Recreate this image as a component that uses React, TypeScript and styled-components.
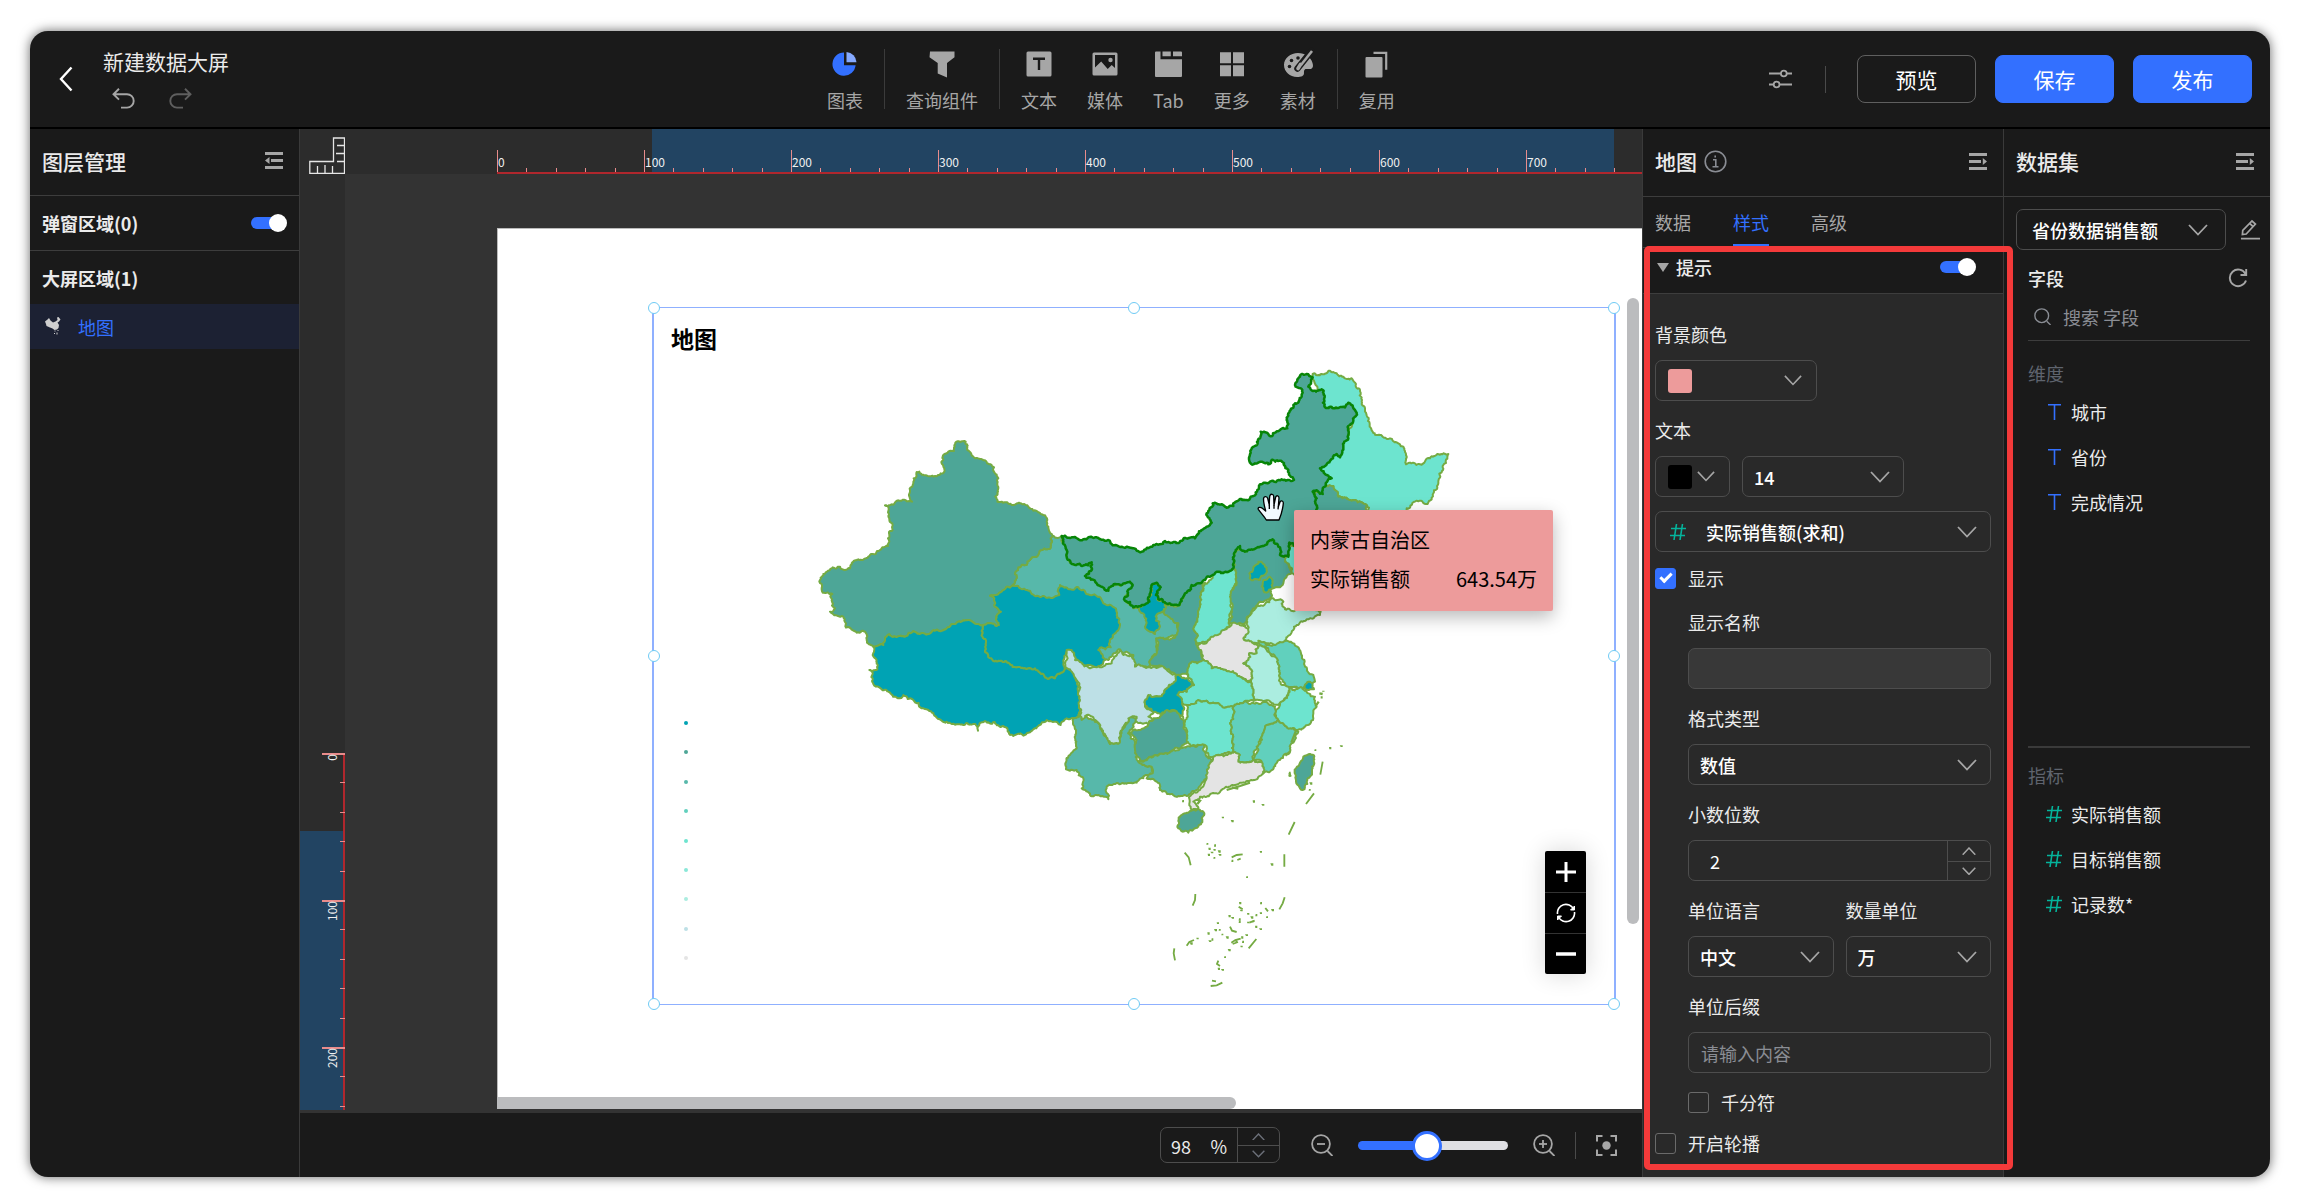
import React from "react";
import styled, { createGlobalStyle } from "styled-components";

const FONT = '"Noto Sans CJK SC", "Noto Sans", sans-serif';

const Global = createGlobalStyle`
  *, *::before, *::after { box-sizing: border-box; }
  body { margin: 0; background: #fff; font-family: ${FONT}; }
  button, input, select { font-family: inherit; color: inherit; margin: 0; padding: 0; }
  button { background: none; border: 0; cursor: pointer; }
  svg { display: block; flex: none; }
  h1, h2, h3, ul { margin: 0; padding: 0; font-weight: inherit; list-style: none; }
`;

/* ---------- shell ---------- */
const Page = styled.div`
  height: 100vh;
  padding: 31px 30px 20px;
  display: flex;
`;
const Shell = styled.div`
  flex: 1;
  min-width: 0;
  display: flex;
  flex-direction: column;
  background: #1a1a1a;
  color: #ebebeb;
  border-radius: 18px;
  overflow: hidden;
  box-shadow: 0 0 12px rgba(0, 0, 0, 0.6);
  font-size: 18px;
  line-height: 24px;
`;
const Header = styled.header`
  height: 98px;
  border-bottom: 2px solid #000;
  display: grid;
  grid-template-columns: minmax(0, 10fr) auto minmax(0, 11fr);
  align-items: center;
`;
const Body = styled.div`
  flex: 1;
  min-height: 0;
  display: grid;
  grid-template-columns: 270px minmax(0, 1fr) 361px 267px;
`;

/* ---------- header ---------- */
const HeadLeft = styled.div`
  display: flex;
  align-items: center;
  gap: 30px;
  padding-left: 29px;
`;
const TitleBlock = styled.div`
  display: flex;
  flex-direction: column;
  gap: 12px;
  padding-bottom: 4px;
`;
const DocTitle = styled.h1`
  font-size: 21px;
  line-height: 30px;
`;
const History = styled.div`
  display: flex;
  gap: 34px;
  padding-left: 9px;
`;
const PlainButton = styled.button`
  display: flex;
  align-items: center;
  justify-content: center;
`;
const Tools = styled.nav`
  display: flex;
  align-items: center;
`;
const Tool = styled.button`
  display: flex;
  flex-direction: column;
  align-items: center;
  gap: 10px;
  padding: 4px 15px 0;
  font-size: 18px;
  line-height: 24px;
  color: #a6a6a6;
`;
const ToolRule = styled.span`
  width: 1px;
  height: 60px;
  margin: 0 6px;
  background: #3b3b3b;
`;
const HeadRight = styled.div`
  display: flex;
  align-items: center;
  justify-content: flex-end;
  gap: 19px;
  padding-right: 18px;
`;
const HeadTools = styled.div`
  display: flex;
  align-items: center;
  gap: 33px;
  padding-right: 12px;
`;
const ShortRule = styled.span`
  width: 1px;
  height: 27px;
  background: #4a4a4a;
`;
const Action = styled.button<{ $primary?: boolean }>`
  width: 119px;
  height: 48px;
  border-radius: 8px;
  border: 1px solid ${(p) => (p.$primary ? "#3370ff" : "#5f5f5f")};
  background: ${(p) => (p.$primary ? "#3370ff" : "transparent")};
  color: #fff;
  font-size: 21px;
`;

/* ---------- shared panel parts ---------- */
const PanelHead = styled.div<{ $h?: number }>`
  height: ${(p) => p.$h ?? 68}px;
  border-bottom: 1px solid #3d3d3d;
  padding: 0 16px 3px 12px;
  display: flex;
  align-items: center;
  justify-content: space-between;
`;
const PanelTitle = styled.h2`
  display: flex;
  align-items: center;
  gap: 7px;
  font-size: 21px;
  line-height: 30px;
  font-weight: 500;
`;
const Toggle = styled.input`
  appearance: none;
  position: relative;
  width: 36px;
  height: 18px;
  cursor: pointer;
  &::before {
    content: "";
    position: absolute;
    inset: 3px 4px 3px 0;
    border-radius: 6px;
    background: #5f5f5f;
  }
  &::after {
    content: "";
    position: absolute;
    left: 0;
    top: 0;
    width: 18px;
    height: 18px;
    border-radius: 50%;
    background: #fff;
  }
  &:checked::before { background: #3370ff; }
  &:checked::after { left: 18px; }
`;

/* ---------- layer panel ---------- */
const Layers = styled.aside`
  border-right: 1px solid #3a3a3a;
`;
const LayerGroup = styled.label<{ $ruled?: boolean }>`
  height: ${(p) => (p.$ruled ? 55 : 53)}px;
  padding: 0 12px;
  border-bottom: ${(p) => (p.$ruled ? "1px solid #3d3d3d" : "0")};
  display: flex;
  align-items: center;
  justify-content: space-between;
  font-weight: 700;
`;
const LayerItem = styled.button`
  width: 100%;
  height: 45px;
  padding: 0 15px;
  display: flex;
  align-items: center;
  gap: 17px;
  background: #1c2133;
  color: #3370ff;
  font-size: 18px;
`;

/* ---------- canvas ---------- */
const Stage = styled.main`
  display: grid;
  min-width: 0;
  min-height: 0;
  grid-template-columns: 45px minmax(0, 1fr);
  grid-template-rows: 45px minmax(0, 1fr) 67px;
`;
const Corner = styled.div`
  background: #2c2c2c;
  display: flex;
  align-items: flex-end;
  justify-content: flex-end;
`;
const Ruler = styled.div`
  background: #2c2c2c;
  overflow: hidden;
  min-height: 0;
`;
const Viewport = styled.div`
  position: relative;
  overflow: hidden;
  background: #333;
`;
const Sheet = styled.div`
  position: absolute;
  left: 152px;
  top: 54px;
  right: 0;
  bottom: 1px;
  background: #fff;
  border-top: 1px solid #bbb;
  border-left: 1px solid #bbb;
  color: #000;
`;
const Widget = styled.section`
  position: absolute;
  left: 154px;
  top: 78px;
  width: 964px;
  height: 698px;
  border: solid #8fb0ff;
  border-width: 1px 2px;
`;
const Handle = styled.i<{ $x: number; $y: number }>`
  position: absolute;
  left: ${(p) => p.$x}%;
  top: ${(p) => p.$y}%;
  width: 12px;
  height: 12px;
  transform: translate(-50%, -50%);
  border-radius: 50%;
  border: 1px solid #6fcbf5;
  background: #fff;
`;
const MapTitle = styled.h3`
  padding: 14px 17px;
  font-size: 23px;
  line-height: 32px;
  font-weight: 700;
`;
const MapCanvas = styled.svg`
  position: absolute;
  left: 146px;
  top: 42px;
`;
const Legend = styled.ul`
  position: absolute;
  left: 30px;
  top: 413px;
  height: 239px;
  display: flex;
  flex-direction: column;
  justify-content: space-between;
`;
const LegendDot = styled.li<{ $c: string }>`
  width: 4px;
  height: 4px;
  border-radius: 50%;
  background: ${(p) => p.$c};
`;
const ZoomBox = styled.div`
  position: absolute;
  right: 28px;
  bottom: 30px;
  width: 41px;
  border-radius: 2px;
  overflow: hidden;
  background: #000;
  box-shadow: 0 0 24px rgba(0, 0, 0, 0.16);
`;
const ZoomButton = styled.button`
  width: 41px;
  height: 41px;
  display: flex;
  align-items: center;
  justify-content: center;
  & + & { border-top: 1px solid #333; }
`;
const Tooltip = styled.div`
  position: absolute;
  left: 640px;
  top: 202px;
  width: 259px;
  height: 101px;
  padding: 10px 16px;
  border-radius: 2px;
  background: #ed9b9b;
  box-shadow: 0 6px 18px rgba(0, 0, 0, 0.28);
  color: #000;
  font-size: 20px;
  line-height: 39px;
`;
const TipRow = styled.div`
  display: flex;
  justify-content: space-between;
`;
const ScrollY = styled.span`
  position: absolute;
  right: 3px;
  top: 124px;
  width: 12px;
  height: 626px;
  border-radius: 6px;
  background: #bbbcbe;
`;
const ScrollX = styled.span`
  position: absolute;
  left: 152px;
  bottom: 1px;
  width: 739px;
  height: 12px;
  border-radius: 0 6px 6px 0;
  background: #bbbcbe;
`;

/* ---------- zoom bar ---------- */
const ZoomBar = styled.footer`
  grid-column: 1 / -1;
  border-top: 3px solid #333;
  background: #1a1a1a;
  display: flex;
  align-items: center;
  justify-content: flex-end;
  padding-right: 25px;
  gap: 25px;
`;
const ZoomEnd = styled.div`
  display: flex;
  align-items: center;
  gap: 20px;
`;
const Percent = styled.div`
  width: 120px;
  height: 36px;
  margin-right: 6px;
  border: 1px solid #4d4d4d;
  border-radius: 7px;
  display: flex;
  overflow: hidden;
  & > label {
    flex: 1;
    display: flex;
    align-items: center;
    justify-content: space-between;
    padding: 2px 10px 0;
  }
`;
const PercentInput = styled.input`
  width: 32px;
  background: none;
  border: 0;
  outline: 0;
  font-size: 18px;
`;
const Stepper = styled.div<{ $w: number }>`
  width: ${(p) => p.$w}px;
  align-self: stretch;
  border-left: 1px solid #4d4d4d;
  display: grid;
  grid-template-rows: 1fr 1fr;
  & > button {
    display: flex;
    align-items: center;
    justify-content: center;
  }
  & > button + button { border-top: 1px solid #4d4d4d; }
`;
const Range = styled.input`
  appearance: none;
  width: 150px;
  height: 30px;
  background: none;
  &::-webkit-slider-runnable-track {
    height: 9px;
    border-radius: 5px;
    background: linear-gradient(90deg, #3370ff 46%, #dfdfe3 46%);
  }
  &::-webkit-slider-thumb {
    appearance: none;
    width: 30px;
    height: 30px;
    margin-top: -10px;
    border-radius: 50%;
    border: 3px solid #3370ff;
    background: #fff;
  }
`;

/* ---------- style panel ---------- */
const StylePanel = styled.aside`
  position: relative;
  border-left: 1px solid #3a3a3a;
  background: #292929;
`;
const PanelTop = styled.div`
  background: #1a1a1a;
`;
const Highlight = styled.div`
  position: absolute;
  z-index: 2;
  left: 1px;
  right: -10px;
  top: 117px;
  bottom: 7px;
  border: 6px solid #f43a3a;
  border-radius: 5px;
  pointer-events: none;
`;
const Tabs = styled.div`
  height: 51px;
  padding: 0 12px;
  border-bottom: 1px solid #3d3d3d;
  display: flex;
  gap: 42px;
`;
const Tab = styled.button<{ $on?: boolean }>`
  font-size: 18px;
  padding: 0 0 1px;
  border-top: 3px solid transparent;
  border-bottom: 3px solid ${(p) => (p.$on ? "#3370ff" : "transparent")};
  color: ${(p) => (p.$on ? "#3370ff" : "#a6a6a6")};
`;
const SectionHead = styled.label`
  height: 46px;
  padding: 0 27px 7px 14px;
  border-bottom: 1px solid #3d3d3d;
  display: flex;
  align-items: center;
  gap: 7px;
  font-weight: 500;
  & > input { margin-left: auto; }
`;
const Form = styled.div`
  padding: 28px 12px 0;
  display: flex;
  flex-direction: column;
  gap: 17px;
`;
const Sub = styled.div`
  padding: 3px 0 0 33px;
  display: flex;
  flex-direction: column;
  gap: 17px;
`;
const Cluster = styled.div`
  display: flex;
  flex-direction: column;
  gap: 14px;
`;
const Columns = styled.div`
  display: grid;
  grid-template-columns: 1fr 1fr;
  gap: 12px;
`;
const Field = styled.div`
  display: flex;
  flex-direction: column;
  align-items: stretch;
  gap: 14px;
`;
const Line = styled.div`
  display: flex;
  gap: 12px;
`;
const Box = styled.div<{ $w?: number; $end?: number }>`
  position: relative;
  width: ${(p) => (p.$w ? p.$w + "px" : "auto")};
  height: 41px;
  border: 1px solid #4d4d4d;
  border-radius: 7px;
  display: flex;
  align-items: center;
  overflow: hidden;
  color: #fff;
  & > svg { margin-right: ${(p) => p.$end ?? 13}px; pointer-events: none; }
`;
const Picker = styled.select<{ $pad?: number }>`
  appearance: none;
  flex: 1;
  min-width: 0;
  align-self: stretch;
  padding-left: ${(p) => p.$pad ?? 11}px;
  border: 0;
  outline: 0;
  background: transparent;
  font-size: 18px;
  font-weight: 500;
  & > option { background: #292929; }
`;
const ColorButton = styled.button<{ $w: number }>`
  width: ${(p) => p.$w}px;
  height: 41px;
  padding: 0 14px 0 12px;
  border: 1px solid #4d4d4d;
  border-radius: 7px;
  display: flex;
  align-items: center;
  justify-content: space-between;
`;
const Swatch = styled.span<{ $c: string }>`
  width: 24px;
  height: 24px;
  border-radius: 3px;
  background: ${(p) => p.$c};
`;
const LeadIcon = styled.span`
  padding-left: 14px;
`;
const TextInput = styled.input<{ $filled?: boolean }>`
  height: 41px;
  padding: 0 12px;
  border: 1px solid #4d4d4d;
  border-radius: 7px;
  outline: 0;
  background: ${(p) => (p.$filled ? "#383838" : "transparent")};
  font-size: 18px;
  &::placeholder { color: #8a8d94; opacity: 1; }
`;
const NumberInput = styled.input`
  flex: 1;
  min-width: 0;
  align-self: stretch;
  padding-left: 21px;
  border: 0;
  outline: 0;
  background: none;
  font-size: 18px;
`;
const Tick = styled.label`
  height: 24px;
  display: flex;
  align-items: center;
  gap: 12px;
`;
const TickBox = styled.input`
  appearance: none;
  width: 21px;
  height: 21px;
  border: 1px solid #6a6a6a;
  border-radius: 3px;
  display: grid;
  place-items: center;
  &:checked {
    background: #3370ff;
    border-color: #3370ff;
  }
  &:checked::before {
    content: "";
    width: 12px;
    height: 7px;
    border: solid #fff;
    border-width: 0 0 3px 3px;
    transform: translateY(-2px) rotate(-45deg);
  }
`;

/* ---------- dataset panel ---------- */
const DataPanel = styled.aside`
  border-left: 1px solid #3a3a3a;
  display: flex;
  flex-direction: column;
  min-height: 0;
`;
const SourceRow = styled.div`
  padding: 12px 10px 16px 12px;
  display: flex;
  align-items: center;
  gap: 14px;
  & > div { flex: 1; }
`;
const FieldsHead = styled.div`
  margin: 0 22px 0 24px;
  display: flex;
  align-items: center;
  justify-content: space-between;
  font-weight: 500;
`;
const Search = styled.label`
  height: 51px;
  margin: 0 20px 0 24px;
  padding: 3px 0 0 6px;
  border-bottom: 1px solid #3d3d3d;
  display: flex;
  align-items: center;
  gap: 12px;
  & > input {
    flex: 1;
    min-width: 0;
    border: 0;
    outline: 0;
    background: none;
    font-size: 18px;
  }
  & > input::placeholder { color: #8a8d94; opacity: 1; }
`;
const FieldGroup = styled.section<{ $grow: number; $top: number; $ruled?: boolean }>`
  flex: ${(p) => p.$grow} 1 0;
  margin: 0 20px 0 24px;
  padding-top: ${(p) => p.$top}px;
  border-bottom: ${(p) => (p.$ruled ? "2px solid #3a3a3a" : "0")};
`;
const GroupName = styled.h3`
  color: #5f646e;
  font-size: 18px;
  padding-bottom: 4px;
`;
const FieldRow = styled.li`
  height: 45px;
  padding-left: 18px;
  display: flex;
  align-items: center;
  gap: 9px;
`;

/* ---------- icons ---------- */
const Chevron = ({ w = 20, up = false, c = "#a6a6a6" }: { w?: number; up?: boolean; c?: string }) => (
  <svg width={w} height={w * 0.6} viewBox="0 0 20 12" fill="none" stroke={c} strokeWidth={w < 18 ? 2.2 : 1.8}>
    <path d={up ? "M1 11 10 1.5 19 11" : "M1 1 10 10.5 19 1"} />
  </svg>
);
const Hash = () => (
  <svg width="16" height="18" viewBox="0 0 16 18" fill="none" stroke="#04b49c" strokeWidth="1.6">
    <path d="M6.5 1 4 17M12.500 1 10 17M1 5.5h15M0 12.5h15" />
  </svg>
);
const TextType = () => (
  <svg width="16" height="18" viewBox="0 0 16 18" fill="none" stroke="#3370ff" strokeWidth="1.6">
    <path d="M2 1.8h13M8.5 1.8V17" />
  </svg>
);
const Fold = ({ left = false }: { left?: boolean }) => (
  <svg width="18" height="17" viewBox="0 0 18 17" fill="#a6a6a6">
    <path d="M0 0h18v3H0zM0 14h18v3H0z" />
    {left ? <path d="M6 7h12v3H6zM0 8.500 4.5 5v7z" /> : <path d="M0 7h12v3H0zM18 8.500 13.8 5v7z" />}
  </svg>
);
const Back = () => (
  <svg width="14" height="26" viewBox="0 0 14 26" fill="none" stroke="#fff" strokeWidth="2.4">
    <path d="M12.5 1.5 2 13l10.500 11.500" />
  </svg>
);
const Undo = ({ flip = false }: { flip?: boolean }) => (
  <svg width="23" height="21" viewBox="0 0 23 21" fill="none" stroke={flip ? "#5f5f5f" : "#a6a6a6"} strokeWidth="1.9">
    <g transform={flip ? "translate(23 0) scale(-1 1)" : undefined}>
      <path d="M7 .8 1.500 6.200 7 11.600M2 6.200h13a6.600 6.600 0 0 1 0 13.400H9" />
    </g>
  </svg>
);
const Sliders = () => (
  <svg width="23" height="20" viewBox="0 0 23 20" fill="none" stroke="#a6a6a6" strokeWidth="1.8">
    <path d="M0 4.500h11.500M18 4.500h5M0 15.500h4.500M11 15.500h12" />
    <circle cx="14.800" cy="4.500" r="2.900" />
    <circle cx="7.600" cy="15.500" r="2.900" />
  </svg>
);
const Info = () => (
  <svg width="23" height="23" viewBox="0 0 23 23" fill="none" stroke="#8a8d94" strokeWidth="1.6">
    <circle cx="11.500" cy="11.500" r="10.300" />
    <path d="M9 9.800h2.800v6.700M8.500 16.800h6M11.200 5.500v2" />
  </svg>
);
const Pencil = () => (
  <svg width="20" height="21" viewBox="0 0 21 21" fill="none" stroke="#a6a6a6" strokeWidth="1.8">
    <path d="M1 20h20M2.500 15.800l.4-4.300L12.600 1.600l3.600 3.300-9.700 10.300zM10.300 4.200l3.500 3.200" />
  </svg>
);
const Refresh = () => (
  <svg width="20" height="20" viewBox="0 0 20 20" fill="none" stroke="#a6a6a6" strokeWidth="1.9">
    <path d="M18 12.500A8.300 8.300 0 1 1 17.500 6M18.200 1v6h-5.700" />
  </svg>
);
const Lens = ({ mode, c = "#a6a6a6", s = 22 }: { mode?: "+" | "-"; c?: string; s?: number }) => (
  <svg width={s} height={s} viewBox="0 0 22 22" fill="none" stroke={c} strokeWidth="1.8">
    <circle cx="10" cy="10" r="8.900" />
    <path d="m16.500 17 5 5" />
    {mode && <path d="M6 10h8" />}
    {mode === "+" && <path d="M10 6v8" />}
  </svg>
);
const Fit = () => (
  <svg width="21" height="21" viewBox="0 0 21 21" fill="none" stroke="#a6a6a6" strokeWidth="2">
    <path d="M1 6.500V1h5.500M14.500 1H20v5.500M20 14.500V20h-5.500M6.500 20H1v-5.500" />
    <circle cx="10.500" cy="10.500" r="4.200" fill="#a6a6a6" stroke="none" />
  </svg>
);
const RulerCorner = () => (
  <svg width="36" height="37" viewBox="0 0 36 37" fill="none" stroke="#e6e6e6" strokeWidth="1.300">
    <path d="M24.500 1h11v35.300H.8V24.500h23.700zM8.500 36v-7M16 36v-8M23.500 36v-7M35 8.500h-7M35 16.500h-8M35 24.500h-7" />
  </svg>
);
const ChinaThumb = () => (
  <svg width="16" height="19" viewBox="0 0 16 19" fill="#cfcfcf">
    <path d="M0 4.500 2.500 2.500 4 1l1.500 2.500L8 5.500l2.500-1L12.500 3 12 .5 13.500 0l2 2.500-1.500 2-1.500 1L14 8l-.5 3-1.500 1.500-2.500.5-2-1.500L5 10.500 1.500 9 1 7z" />
    <path d="M9.500 13.500h1v1h-1zM12.500 13h1v1h-1zM9 16h1v1H9zM11.500 15.500h1v2h-1z" />
  </svg>
);

type ToolDef = { label: string; icon: React.ReactNode; rule?: boolean };
const G = "#a6a6a6";
const tools: ToolDef[] = [
  {
    label: "图表",
    rule: true,
    icon: (
      <>
        <path d="M12 1.500V14.200h11.600A11.600 11.600 0 1 1 12 1.500z" fill="#3370ff" />
        <path d="M14.500 1a10.500 10.500 0 0 1 10 10.200h-10z" fill="#85a9ff" />
      </>
    ),
  },
  {
    label: "查询组件",
    rule: true,
    icon: <path d="M1 .5h24.500v5.700L18 12v14.500l-9.300-4V12L.5 6.200z" fill={G} />,
  },
  {
    label: "文本",
    icon: (
      <>
        <rect x=".5" y=".5" width="25" height="25" rx="1.500" fill={G} />
        <path d="M7 7.800h12M13 7.800V19" stroke="#1a1a1a" strokeWidth="2.400" />
      </>
    ),
  },
  {
    label: "媒体",
    icon: (
      <>
        <rect x=".5" y="1.500" width="25" height="23" rx="1.500" fill={G} />
        <path d="M3 4h20v13l-3.300-3-4 4-6.500-7.500L3 16.500z" fill="#1a1a1a" />
        <circle cx="18.500" cy="9" r="2.200" fill={G} />
      </>
    ),
  },
  {
    label: "Tab",
    icon: (
      <>
        <path d="M0 1.500A1 1 0 0 1 1 .5h4.500v7.700H27V25a1 1 0 0 1-1 1H1a1 1 0 0 1-1-1z" fill={G} />
        <path d="M7.500.5h8.300v4.800H7.500zM18 .5h8a1 1 0 0 1 1 1v3.800h-9z" fill={G} />
      </>
    ),
  },
  {
    label: "更多",
    icon: <path d="M1 1.300h11v11H1zM14 1.300h11v11H14zM1 14.300h11v11H1zM14 14.300h11v11H14z" fill={G} />,
  },
  {
    label: "素材",
    rule: true,
    icon: (
      <>
        <path d="M13 2C5.500 2-1 7.300-1 14s6 12 13 12c4.500 0 7-1 7-4 0-2 0-4 2.500-4H26c2-1 2.500-3 1.500-6C26 6 20 2 13 2z" fill={G} />
        <g fill="#1a1a1a">
          <circle cx="4.500" cy="15.500" r="1.800" />
          <circle cx="6.500" cy="9.500" r="1.800" />
          <circle cx="13" cy="7" r="1.800" />
        </g>
        <path d="M26.500 0 12.500 17.500" stroke="#1a1a1a" strokeWidth="6.500" strokeLinecap="round" />
        <path d="M27 0 16 14" stroke={G} strokeWidth="2.600" />
        <path d="M15.500 13.500 13 17.500" stroke={G} strokeWidth="3.600" strokeLinecap="round" />
      </>
    ),
  },
  {
    label: "复用",
    icon: (
      <>
        <rect x="1.500" y="6" width="17" height="20.500" rx="1" fill={G} />
        <path d="M9.500 1.800h12.700v17" fill="none" stroke={G} strokeWidth="2.200" />
      </>
    ),
  },
];

/* ---------- rulers ---------- */
const STEP = 147;
function HorizontalRuler() {
  const zero = 152.5;
  const marks = Array.from({ length: 39 }, (_, i) => i);
  return (
    <svg width="100%" height="45">
      <rect x="307" width="962" height="45" fill="#224462" />
      <rect x="152" y="43" width="100%" height="2" fill="#b0272d" />
      {marks.map((i) => {
        const x = Math.round(zero + (i * STEP) / 5 - 0.5);
        return <rect key={i} x={x} y={i % 5 ? 39 : 21} width="1" height={i % 5 ? 4 : 22} fill="#e88c8c" />;
      })}
      {marks
        .filter((i) => i % 5 === 0)
        .map((i) => (
          <text key={i} x={Math.round(zero + (i * STEP) / 5)} y="38" fontSize="12" fill="#f0f0f0">
            {i * 20}
          </text>
        ))}
    </svg>
  );
}
function VerticalRuler() {
  const zero = 580;
  const marks = Array.from({ length: 13 }, (_, i) => i);
  return (
    <svg width="45" height="100%">
      <rect y="657" width="43" height="100%" fill="#224462" />
      <rect x="43" y={zero} width="2" height="100%" fill="#b0272d" />
      {marks.map((i) => {
        const y = Math.round(zero + (i * STEP) / 5 - 1);
        return <rect key={i} x={i % 5 ? 40 : 22} y={y} width={i % 5 ? 5 : 23} height={i % 5 ? 1 : 2} fill="#e88c8c" />;
      })}
      {marks
        .filter((i) => i % 5 === 0)
        .map((i) => (
          <text
            key={i}
            transform={`translate(37 ${zero + (i * STEP) / 5}) rotate(-90)`}
            textAnchor="end"
            fontSize="12"
            fill="#f0f0f0"
          >
            {i * 20}
          </text>
        ))}
    </svg>
  );
}

/* ---------- map ---------- */
type Pt = [number, number];
const parse = (s: string, ox: number, oy: number): Pt[] =>
  s.trim().split(/\s+/).map((p) => {
    const [x, y] = p.split(",").map(Number);
    return [x + ox, y + oy];
  });
const noise = (a: Pt, b: Pt) => {
  const v = Math.sin(a[0] * 12.9898 + a[1] * 78.233 + b[0] * 37.719 + b[1] * 11.131) * 43758.5453;
  return v - Math.floor(v) - 0.5;
};
/* Displaces edge midpoints; the result is the same whichever way an edge is walked. */
function split(a: Pt, b: Pt, depth: number): Pt[] {
  const dx = b[0] - a[0];
  const dy = b[1] - a[1];
  const len = Math.hypot(dx, dy);
  if (len < 6 || depth === 0) return [b];
  const fwd = a[0] < b[0] || (a[0] === b[0] && a[1] < b[1]);
  const n = fwd ? noise(a, b) : -noise(b, a);
  const k = Math.min(len * 0.5, 11) * n;
  const m: Pt = [
    Math.round((a[0] + b[0]) / 2 - (dy / len) * k),
    Math.round((a[1] + b[1]) / 2 + (dx / len) * k),
  ];
  return [...split(a, m, depth - 1), ...split(m, b, depth - 1)];
}
function outline(pts: Pt[]) {
  let out: Pt[] = [pts[0]];
  pts.forEach((p, i) => {
    out = out.concat(split(p, pts[(i + 1) % pts.length], 4));
  });
  return "M" + out.map((p) => p.join(" ")).join("L") + "Z";
}

const W: Pt = [0, 0];
const N: Pt = [720, 0];
const E: Pt = [720, 630];
const provinces: [string, string, Pt, string][] = [
  ["甘肃", "#57b8aa", W, "760,558 785,560 800,600 800,620 822,645 875,637 875,660 855,678 890,700 925,722 935,708 960,708 990,695 1000,710 975,740 985,760 1000,775 1040,765 1092,785 1110,795 1132,805 1135,845 1110,860 1095,868 1075,865 1068,890 1070,912 1055,925 1050,948 1020,950 1000,940 1000,915 965,910 955,898 945,910 925,930 850,900 780,760 640,740 638,706 650,680 655,652 680,645 690,630 718,604 750,596 752,565"],
  ["新疆", "#4da697", W, "58,695 70,672 98,652 120,650 128,658 150,655 162,632 188,630 210,615 240,600 264,588 264,565 278,540 268,505 266,475 255,466 285,457 312,449 336,455 327,437 338,405 350,366 375,376 410,379 428,370 428,320 436,311 462,303 466,278 497,275 502,300 525,325 548,329 572,343 582,365 595,385 595,415 586,440 592,455 625,461 668,463 700,482 730,495 745,530 760,558 752,565 750,596 718,604 690,630 680,645 655,652 650,680 638,706 605,725 570,737 583,745 583,765 603,785 590,803 597,825 550,825 512,812 470,818 440,835 385,852 340,843 318,858 268,853 250,885 220,890 200,870 197,848 170,848 138,833 130,800 90,785 105,775 97,732 68,728 66,710"],
  ["西藏", "#00a3b4", W, "220,890 250,885 268,853 318,858 340,843 385,852 440,835 470,818 512,812 550,825 548,850 558,875 555,905 580,933 630,942 670,955 705,955 735,982 765,985 790,965 793,950 815,960 832,995 840,1040 840,1085 828,1110 800,1105 782,1125 740,1110 715,1128 685,1148 670,1157 630,1155 610,1128 555,1113 538,1125 534,1142 526,1122 480,1123 440,1115 410,1103 385,1080 365,1075 340,1050 310,1035 294,1045 270,1028 228,1010 218,990 218,972 208,960 232,958 230,930 218,915"],
  ["青海", "#00a3b4", W, "570,737 605,725 638,706 655,708 690,722 705,738 750,743 778,735 780,705 808,718 835,712 870,735 905,750 938,770 950,795 960,822 945,850 930,870 932,892 900,893 895,900 915,930 905,945 890,955 850,945 830,935 822,908 803,900 793,925 793,950 790,965 765,985 735,982 705,955 670,955 630,942 580,933 555,905 558,875 548,850 550,825 597,825 590,803 603,785 583,765 583,745"],
  ["陕西", "#4da697", E, "375,135 420,135 430,115 460,75 495,68 480,110 472,180 468,250 485,270 490,300 450,310 445,345 410,345 375,325 330,318 335,295 350,280 348,235 375,238 410,225 415,190 385,170 372,155"],
  ["宁夏", "#00a3b4", W, "1075,698 1060,700 1052,730 1045,755 1015,773 1020,785 1033,800 1035,830 1065,852 1070,840 1080,830 1078,815 1068,812 1075,790 1090,783 1095,760 1072,748 1080,705"],
  ["山西", "#6de4cf", E, "495,72 530,35 583,25 590,60 575,110 578,150 570,200 545,225 510,238 468,250 472,180 480,110"],
  ["河北", "#4da697", N, "582,655 580,615 600,590 615,605 660,590 698,568 712,582 720,615 740,620 735,635 755,670 730,700 695,715 695,740 660,755 640,775 622,800 615,827 568,820 575,780 570,740 590,700"],
  ["北京", "#00a3b4", N, "628,670 640,655 655,635 675,650 678,670 660,690 632,688"],
  ["天津", "#00a3b4", N, "670,690 688,680 697,715 680,728 665,710"],
  ["辽宁", "#6de4cf", N, "735,630 750,585 775,590 800,640 775,690 755,668"],
  ["黑龙江", "#6de4cf", N, "818,72 870,62 910,80 935,85 960,120 975,180 998,245 1050,265 1090,290 1098,343 1140,343 1170,325 1225,312 1210,345 1195,400 1180,430 1163,462 1130,452 1100,475 1085,510 980,500 980,465 945,450 895,440 880,408 858,405 840,355 900,300 925,250 945,188 850,175"],
  ["吉林", "#4da697", N, "820,425 858,408 880,408 895,440 945,450 980,465 985,500 830,500"],
  ["山东", "#abede0", E, "695,115 730,125 735,148 765,152 800,130 842,155 840,165 800,178 770,195 750,225 735,245 705,255 660,252 610,235 625,205 620,180 650,140"],
  ["河南", "#e4e4e4", E, "570,200 575,190 615,197 625,212 610,235 640,250 655,258 650,280 628,280 625,300 610,310 635,330 637,355 620,362 600,350 570,335 515,325 490,300 475,255 510,238"],
  ["江苏", "#61d0bd", E, "655,242 680,255 705,255 735,243 775,262 795,320 820,345 825,365 800,370 790,387 748,382 728,365 718,350 718,320 705,290 685,270"],
  ["安徽", "#abede0", E, "655,258 680,270 705,290 718,320 718,350 728,375 748,382 740,410 715,435 690,425 640,422 640,400 635,370 637,355 635,330 610,310 625,300 628,280 650,280"],
  ["上海", "#00a3b4", E, "797,372 810,365 822,388 798,388"],
  ["湖北", "#6de4cf", E, "450,310 490,300 515,325 570,335 600,350 635,370 640,400 640,422 605,430 580,440 540,435 500,422 475,420 440,435 425,430 412,405 440,395 462,375 445,345"],
  ["重庆", "#00a3b4", E, "410,345 445,355 462,375 440,395 412,405 430,440 430,475 400,450 350,458 315,435 325,405 365,408 380,385"],
  ["云南", "#57b8aa", E, "125,462 140,470 180,495 210,552 240,545 245,510 270,470 290,475 265,520 285,545 295,605 335,620 338,645 310,655 290,668 235,670 200,680 205,718 175,705 150,705 125,685 130,655 110,630 78,628 80,600 110,565 108,510 98,480"],
  ["四川", "#bde0e6", E, "75,310 80,270 95,270 105,300 145,322 185,322 215,310 222,290 240,268 250,285 275,288 285,320 330,322 375,325 408,345 400,370 380,385 365,408 325,405 315,435 340,460 325,470 340,490 320,488 290,485 290,470 265,475 240,520 240,545 210,552 180,500 140,465 125,480 120,420 118,370 95,335"],
  ["贵州", "#4da697", E, "265,520 320,500 340,475 380,450 410,455 430,480 440,550 400,570 375,580 340,590 300,600 285,570 290,540"],
  ["广西", "#57b8aa", E, "295,605 340,590 375,580 400,570 450,560 490,550 500,590 520,600 500,655 470,690 440,708 390,703 360,690 350,665 320,655 338,640 335,620"],
  ["湖南", "#6de4cf", E, "440,435 475,420 500,422 540,435 580,440 582,460 570,490 580,530 580,575 520,590 505,595 495,555 445,550 440,520 435,480"],
  ["江西", "#61d0bd", E, "580,440 605,430 675,425 705,440 715,480 680,495 665,530 640,600 595,605 580,575 580,530 570,490 582,460"],
  ["福建", "#61d0bd", E, "715,480 740,500 775,515 755,550 750,575 720,600 690,635 670,640 665,605 640,600 650,560 665,530 680,495"],
  ["浙江", "#6de4cf", E, "720,435 745,405 748,382 790,388 805,400 825,410 830,440 820,475 795,500 770,510 740,500 715,480 708,450"],
  ["广东", "#e4e4e4", E, "520,590 580,578 600,585 595,605 640,600 668,610 670,640 650,658 600,668 570,680 530,700 480,710 460,725 475,745 455,750 448,710 480,690 500,655"],
  ["海南", "#4da697", E, "420,770 445,758 490,755 485,775 475,800 445,818 415,805"],
  ["台湾", "#4da697", E, "790,590 810,582 823,590 810,650 788,690 768,660 768,625"],
];
const innerMongolia =
  "65,558 100,562 135,567 165,562 205,570 215,582 250,592 290,602 305,605 340,585 375,573 420,574 465,565 485,540 515,518 500,490 518,460 560,473 580,468 600,447 630,445 652,420 660,403 690,395 725,388 762,390 745,360 718,332 695,330 685,343 662,335 640,343 627,328 640,290 662,245 697,258 720,240 742,235 740,210 765,160 785,140 782,115 765,105 780,80 800,72 818,82 805,110 822,122 845,118 855,172 880,175 915,172 925,158 950,188 930,225 925,265 910,290 900,322 890,312 840,355 860,375 875,385 858,405 848,432 818,425 830,445 830,490 790,585 765,590 748,578 745,620 720,615 712,582 698,568 660,590 615,605 600,588 582,610 580,655 530,665 495,690 455,705 430,740 418,765 400,765 355,748 348,735 362,712 350,698 335,705 328,755 280,772 252,748 262,725 278,705 270,695 215,708 205,722 170,700 135,678 155,660 155,637 105,645 80,620 80,600";

const seaLines =
  "M608 65 601 104M582 160 558 192M524 246 506 284M493 343V380M494 472 488 490 478 508M409 597 386 625M163 625 161 640 165 661M226 462 225 480 218 497M194 338 206 352 212 376M335 352 350 345 368 343M352 360l10-4M330 560 336 572 350 576M272 738 290 736 307 728M200 617 208 606 222 600M334 608 346 600 362 596M338 612l16-6M295 662 291 672 300 678M276 722l12 2M356 500l12 8M436 504l8 10M388 548l16-6";
const specks: Pt[] = [
  [587, 31], [630, 24], [662, 19], [510, 98], [508, 108], [571, 130], [570, 150], [401, 184], [427, 195], [190, 183],
  [308, 233], [335, 243], [263, 312], [268, 326], [274, 338], [286, 316], [283, 330], [296, 334], [284, 354], [266, 344], [298, 345],
  [338, 362], [422, 336], [454, 373], [382, 412], [360, 489], [362, 512], [424, 489], [422, 520], [456, 510], [442, 532],
  [328, 528], [336, 534], [360, 538], [384, 522], [394, 532], [400, 545], [408, 560], [420, 568], [360, 545], [293, 550], [285, 570],
  [300, 570], [265, 580], [268, 604], [278, 598], [232, 596], [320, 592], [308, 584], [366, 592], [378, 586], [370, 605], [364, 620],
  [326, 630], [316, 652], [296, 686], [306, 690], [410, 525], [384, 548], [212, 610], [350, 604],
];
const coast = "M850 392v3M838 400l10 2M842 412h6M836 425l-8 12M768 512l-14 36M750 575l-14 12M560 690l40-12 30-10M575 682l20 4M470 718l10 4-8 10M748 640l4 10";

function ChinaMap() {
  return (
    <MapCanvas width="680" height="660" viewBox="0 0 2040 1980" role="img" aria-label="地图">
      <g stroke="#75ab43" strokeWidth="6" strokeLinejoin="round">
        {provinces.map(([name, fill, o, pts]) => (
          <path key={name} d={outline(parse(pts, o[0], o[1]))} fill={fill} />
        ))}
      </g>
      <path d={outline(parse(innerMongolia, 720, 0))} fill="#4da697" stroke="#078507" strokeWidth="7.500" strokeLinejoin="round" />
      <path transform="translate(720 630)" d={coast} fill="none" stroke="#75ab43" strokeWidth="7" />
      <g transform="translate(960 1170)" fill="#75ab43">
        <path d={seaLines} fill="none" stroke="#75ab43" strokeWidth="5.500" />
        {specks.map(([x, y], i) => (
          <path key={i} d={`M${x - 3} ${y - 3}h${5 + (i % 3) * 2}v${5 + (i % 2) * 2}h-6z`} />
        ))}
      </g>
      <g transform="translate(1372 432)" stroke="#000" strokeWidth="4" strokeLinejoin="round">
        <path
          d="M27 78C20 66 8 54 3 46c-3-6 6-8 12-3l10 8C22 38 17 22 19 12c2-6 10-5 12 1l5 20C36 22 36 10 38 4c3-5 10-4 11 2l1 27 5-24c3-6 10-4 10 3l-2 26 5-14c4-6 10-3 10 3-1 14-6 34-13 51z"
          fill="#f2faff"
        />
        <path d="M36 33v12M50 33v11M63 38l-1 8" fill="none" />
      </g>
    </MapCanvas>
  );
}

const legend = ["#00a3b4", "#4da697", "#57b8aa", "#61d0bd", "#6de4cf", "#8ae8d8", "#abede0", "#bde0e6", "#e4e4e4"];
const handles: Pt[] = [[0, 0], [50, 0], [100, 0], [0, 50], [100, 50], [0, 100], [50, 100], [100, 100]];

type SelectBoxProps = { id: string; value: string; w?: number; pad?: number; end?: number; lead?: React.ReactNode };
function SelectBox({ id, value, w, pad, end, lead }: SelectBoxProps) {
  return (
    <Box $w={w} $end={end}>
      {lead && <LeadIcon>{lead}</LeadIcon>}
      <Picker id={id} aria-label={value} $pad={pad} defaultValue={value}>
        <option>{value}</option>
      </Picker>
      <Chevron />
    </Box>
  );
}

export default function App() {
  return (
    <>
      <Global />
      <Page>
        <Shell>
          <Header>
            <HeadLeft>
              <PlainButton aria-label="返回"><Back /></PlainButton>
              <TitleBlock>
                <DocTitle>新建数据大屏</DocTitle>
                <History>
                  <PlainButton aria-label="撤销"><Undo /></PlainButton>
                  <PlainButton aria-label="重做"><Undo flip /></PlainButton>
                </History>
              </TitleBlock>
            </HeadLeft>
            <Tools>
              {tools.map((t) => (
                <React.Fragment key={t.label}>
                  <Tool>
                    <svg width="26" height="27" viewBox="0 0 26 27" overflow="visible">{t.icon}</svg>
                    {t.label}
                  </Tool>
                  {t.rule && <ToolRule />}
                </React.Fragment>
              ))}
            </Tools>
            <HeadRight>
              <HeadTools>
                <PlainButton aria-label="设置"><Sliders /></PlainButton>
                <ShortRule />
              </HeadTools>
              <Action>预览</Action>
              <Action $primary>保存</Action>
              <Action $primary>发布</Action>
            </HeadRight>
          </Header>

          <Body>
            <Layers>
              <PanelHead $h={67}>
                <PanelTitle>图层管理</PanelTitle>
                <PlainButton aria-label="收起"><Fold left /></PlainButton>
              </PanelHead>
              <LayerGroup $ruled>
                弹窗区域(0)
                <Toggle type="checkbox" defaultChecked />
              </LayerGroup>
              <LayerGroup as="div">大屏区域(1)</LayerGroup>
              <LayerItem>
                <ChinaThumb />
                地图
              </LayerItem>
            </Layers>

            <Stage>
              <Corner><RulerCorner /></Corner>
              <Ruler><HorizontalRuler /></Ruler>
              <Ruler><VerticalRuler /></Ruler>
              <Viewport>
                <Sheet>
                  <Widget>
                    <MapTitle>地图</MapTitle>
                    <ChinaMap />
                    <Legend>
                      {legend.map((c) => <LegendDot key={c} $c={c} />)}
                    </Legend>
                    <ZoomBox>
                      <ZoomButton aria-label="放大">
                        <svg width="20" height="20" viewBox="0 0 20 20" stroke="#fff" strokeWidth="3"><path d="M0 10h20M10 0v20" /></svg>
                      </ZoomButton>
                      <ZoomButton aria-label="还原">
                        <svg width="20" height="20" viewBox="0 0 20 20" fill="none" stroke="#fff" strokeWidth="1.600">
                          <path d="M1.500 11A8.500 8.500 0 0 1 17.500 6M18.500 9A8.500 8.500 0 0 1 2.500 14" />
                          <path d="M18.500 3v4h-4zM1.500 17v-4h4z" fill="#fff" strokeWidth="1" />
                        </svg>
                      </ZoomButton>
                      <ZoomButton aria-label="缩小">
                        <svg width="20" height="20" viewBox="0 0 20 20" stroke="#fff" strokeWidth="3.500"><path d="M0 10h20" /></svg>
                      </ZoomButton>
                    </ZoomBox>
                    <Tooltip>
                      <TipRow>内蒙古自治区</TipRow>
                      <TipRow><span>实际销售额</span><span>643.54万</span></TipRow>
                    </Tooltip>
                    {handles.map(([x, y]) => <Handle key={`${x}-${y}`} $x={x} $y={y} />)}
                  </Widget>
                </Sheet>
                <ScrollY />
                <ScrollX />
              </Viewport>
              <ZoomBar>
                <Percent>
                  <label><PercentInput defaultValue="98" aria-label="缩放比例" />%</label>
                  <Stepper $w={42}>
                    <button aria-label="增加"><Chevron w={13} up c="#6b6f78" /></button>
                    <button aria-label="减少"><Chevron w={13} c="#6b6f78" /></button>
                  </Stepper>
                </Percent>
                <PlainButton aria-label="缩小画布"><Lens mode="-" /></PlainButton>
                <Range type="range" min={0} max={100} defaultValue={45} aria-label="缩放" />
                <ZoomEnd>
                  <PlainButton aria-label="放大画布"><Lens mode="+" /></PlainButton>
                  <ShortRule />
                  <PlainButton aria-label="适应画布"><Fit /></PlainButton>
                </ZoomEnd>
              </ZoomBar>
            </Stage>

            <StylePanel>
              <PanelTop>
                <PanelHead>
                  <PanelTitle>地图 <Info /></PanelTitle>
                  <PlainButton aria-label="收起"><Fold /></PlainButton>
                </PanelHead>
                <Tabs>
                  <Tab>数据</Tab>
                  <Tab $on>样式</Tab>
                  <Tab>高级</Tab>
                </Tabs>
                <SectionHead>
                  <svg width="12" height="9" viewBox="0 0 12 9" fill="#a6a6a6"><path d="M0 0h12L6 9z" /></svg>
                  提示
                  <Toggle type="checkbox" defaultChecked />
                </SectionHead>
              </PanelTop>
              <Form>
                <Field>
                  <span>背景颜色</span>
                  <ColorButton $w={162} aria-label="背景颜色"><Swatch $c="#ed9b9b" /><Chevron w={18} /></ColorButton>
                </Field>
                <Cluster>
                  <Field>
                    <label htmlFor="size">文本</label>
                    <Line>
                      <ColorButton $w={75} aria-label="文本颜色"><Swatch $c="#000" /><Chevron w={18} /></ColorButton>
                      <SelectBox id="size" value="14" w={162} />
                    </Line>
                  </Field>
                  <SelectBox id="metric" value="实际销售额(求和)" pad={20} lead={<Hash />} />
                  <Tick><TickBox type="checkbox" defaultChecked />显示</Tick>
                </Cluster>
                <Sub>
                  <Field>
                    <label htmlFor="name">显示名称</label>
                    <TextInput id="name" $filled />
                  </Field>
                  <Field>
                    <label htmlFor="format">格式类型</label>
                    <SelectBox id="format" value="数值" />
                  </Field>
                  <Field>
                    <label htmlFor="digits">小数位数</label>
                    <Box>
                      <NumberInput id="digits" defaultValue="2" />
                      <Stepper $w={43}>
                        <button aria-label="增加"><Chevron w={14} up /></button>
                        <button aria-label="减少"><Chevron w={14} /></button>
                      </Stepper>
                    </Box>
                  </Field>
                  <Columns>
                    <Field>
                      <label htmlFor="lang">单位语言</label>
                      <SelectBox id="lang" value="中文" />
                    </Field>
                    <Field>
                      <label htmlFor="unit">数量单位</label>
                      <SelectBox id="unit" value="万" />
                    </Field>
                  </Columns>
                  <Field>
                    <label htmlFor="suffix">单位后缀</label>
                    <TextInput id="suffix" placeholder="请输入内容" />
                  </Field>
                  <Tick><TickBox type="checkbox" />千分符</Tick>
                </Sub>
                <Tick><TickBox type="checkbox" />开启轮播</Tick>
              </Form>
              <Highlight />
            </StylePanel>

            <DataPanel>
              <PanelHead>
                <PanelTitle>数据集</PanelTitle>
                <PlainButton aria-label="收起"><Fold /></PlainButton>
              </PanelHead>
              <SourceRow>
                <SelectBox id="source" value="省份数据销售额" pad={15} end={17} />
                <PlainButton aria-label="编辑"><Pencil /></PlainButton>
              </SourceRow>
              <FieldsHead>
                字段
                <PlainButton aria-label="刷新"><Refresh /></PlainButton>
              </FieldsHead>
              <Search>
                <Lens c="#8a8d94" s={17} />
                <input placeholder="搜索 字段" aria-label="搜索 字段" />
              </Search>
              <FieldGroup $grow={27} $top={20} $ruled>
                <GroupName>维度</GroupName>
                <ul>
                  {["城市", "省份", "完成情况"].map((f) => (
                    <FieldRow key={f}><TextType />{f}</FieldRow>
                  ))}
                </ul>
              </FieldGroup>
              <FieldGroup $grow={29} $top={15}>
                <GroupName>指标</GroupName>
                <ul>
                  {["实际销售额", "目标销售额", "记录数*"].map((f) => (
                    <FieldRow key={f}><Hash />{f}</FieldRow>
                  ))}
                </ul>
              </FieldGroup>
            </DataPanel>
          </Body>
        </Shell>
      </Page>
    </>
  );
}
